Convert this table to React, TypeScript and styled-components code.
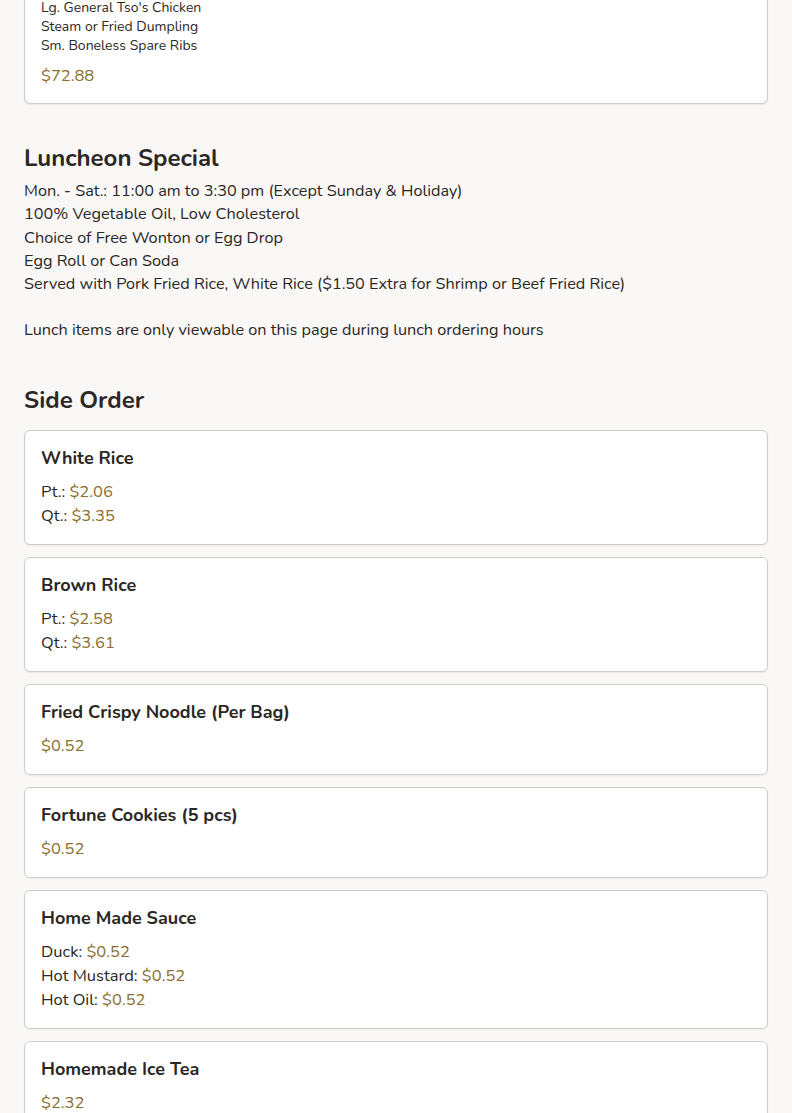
import React from "react";
import styled, { createGlobalStyle } from "styled-components";

const Global = createGlobalStyle`
  html, body { margin: 0; padding: 0; background: #f9f8f7; }
  body { font-family: "Nunito", "Lato", "Noto Sans", sans-serif; color: #2b2724; }
  * { box-sizing: border-box; }
`;

const Page = styled.main`
  padding: 0 24px 40px;
  display: flex;
  flex-direction: column;
`;

const Card = styled.div<{ $cut?: boolean }>`
  background: #fff;
  border: 1px solid #cfcccb;
  border-radius: 6px;
  padding: 16px 16px 16px;
  box-shadow: 0 1px 2px rgba(0, 0, 0, 0.06);
  ${(p) =>
    p.$cut &&
    `
    border-top: none;
    border-top-left-radius: 0;
    border-top-right-radius: 0;
    padding-top: 0;
    padding-bottom: 15px;
  `}
`;

const CardList = styled.div`
  display: flex;
  flex-direction: column;
  gap: 12px;
  margin-top: 14px;
`;

const ComboLines = styled.div`
  margin-top: -2px;
  font-size: 14px;
  line-height: 19px;
`;

const ItemTitle = styled.h3`
  margin: 0 0 11px;
  font-size: 18px;
  line-height: 22px;
  font-weight: 700;
  color: #2b2724;
`;

const PriceRow = styled.div`
  font-size: 16.5px;
  line-height: 24px;
`;

const Price = styled.span`
  color: #8a6e2f;
`;

const ComboPrice = styled(PriceRow)`
  margin-top: 9px;
`;

const SectionTitle = styled.h2<{ $top: number }>`
  margin: ${(p) => p.$top}px 0 0;
  font-size: 24px;
  line-height: 31px;
  font-weight: 700;
  color: #2b2724;
`;

const Description = styled.div`
  margin-top: 6px;
  font-size: 16.25px;
  line-height: 23.3px;
`;

const Note = styled.p`
  margin: 23px 0 0;
  font-size: 16.25px;
  line-height: 23.3px;
`;

type Item = { title: string; prices: { label?: string; price: string }[] };

const sides: Item[] = [
  { title: "White Rice", prices: [{ label: "Pt.", price: "$2.06" }, { label: "Qt.", price: "$3.35" }] },
  { title: "Brown Rice", prices: [{ label: "Pt.", price: "$2.58" }, { label: "Qt.", price: "$3.61" }] },
  { title: "Fried Crispy Noodle (Per Bag)", prices: [{ price: "$0.52" }] },
  { title: "Fortune Cookies (5 pcs)", prices: [{ price: "$0.52" }] },
  {
    title: "Home Made Sauce",
    prices: [
      { label: "Duck", price: "$0.52" },
      { label: "Hot Mustard", price: "$0.52" },
      { label: "Hot Oil", price: "$0.52" },
    ],
  },
  { title: "Homemade Ice Tea", prices: [{ price: "$2.32" }] },
];

export default function App() {
  return (
    <>
      <Global />
      <Page>
        <Card $cut>
          <ComboLines>
            <div>Lg. General Tso's Chicken</div>
            <div>Steam or Fried Dumpling</div>
            <div>Sm. Boneless Spare Ribs</div>
          </ComboLines>
          <ComboPrice>
            <Price>$72.88</Price>
          </ComboPrice>
        </Card>

        <SectionTitle $top={39}>Luncheon Special</SectionTitle>
        <Description>
          <div>Mon. - Sat.: 11:00 am to 3:30 pm (Except Sunday &amp; Holiday)</div>
          <div>100% Vegetable Oil, Low Cholesterol</div>
          <div>Choice of Free Wonton or Egg Drop</div>
          <div>Egg Roll or Can Soda</div>
          <div>Served with Pork Fried Rice, White Rice ($1.50 Extra for Shrimp or Beef Fried Rice)</div>
        </Description>
        <Note>Lunch items are only viewable on this page during lunch ordering hours</Note>

        <SectionTitle $top={42}>Side Order</SectionTitle>
        <CardList>
          {sides.map((s) => (
            <Card key={s.title}>
              <ItemTitle>{s.title}</ItemTitle>
              {s.prices.map((p, i) => (
                <PriceRow key={i}>
                  {p.label ? `${p.label}: ` : ""}
                  <Price>{p.price}</Price>
                </PriceRow>
              ))}
            </Card>
          ))}
        </CardList>
      </Page>
    </>
  );
}
